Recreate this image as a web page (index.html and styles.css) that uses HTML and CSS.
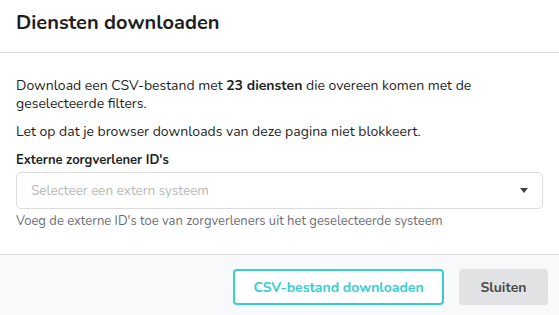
FILE: index.html
```html
<!DOCTYPE html>
<html lang="nl">
<head>
  <meta charset="UTF-8" />
  <title>Diensten downloaden</title>
  <link rel="stylesheet" href="styles.css">
</head>
<body>
  <div class="modal">
    <div class="modal-header">
      <h1>Diensten downloaden</h1>
    </div>

    <div class="modal-body">
      <p>Download een CSV-bestand met <strong>23 diensten</strong> die overeen komen met de geselecteerde filters.</p>
      <p>Let op dat je browser downloads van deze pagina niet blokkeert.</p>

      <div class="form-group">
        <label>Externe zorgverlener ID's</label>
        <div class="select">
          <span class="placeholder">Selecteer een extern systeem</span>
          <span class="caret"></span>
        </div>
        <div class="help">Voeg de externe ID's toe van zorgverleners uit het geselecteerde systeem</div>
      </div>
    </div>

    <div class="modal-footer">
      <button class="btn btn-outline">CSV-bestand downloaden</button>
      <button class="btn btn-grey">Sluiten</button>
    </div>
  </div>
</body>
</html>
```

FILE: styles.css
```css
body {
  margin: 0;
  font-family: "Nunito", Lato, "Noto Sans", sans-serif;
  color: #1f1f1f;
  background-color: white;
}

.modal {
  width: 559px;
  height: 315px;
  display: flex;
  flex-direction: column;
}

.modal-header {
  height: 53px;
  padding: 0 16px;
  border-bottom: 1px solid #dedede;
  box-sizing: border-box;
}

.modal-header h1 {
  margin: 0;
  padding-top: 11px;
  font-size: 20px;
  line-height: 24px;
  font-weight: bold;
  color: #1f1f1f;
}

.modal-body {
  padding: 24px 16px 0;
  flex: 1;
}

.modal-body p {
  margin: 0 0 10px;
  font-size: 14px;
  line-height: 18px;
}

.modal-body strong {
  font-weight: bold;
}

.form-group label {
  display: block;
  font-size: 13px;
  font-weight: bold;
  line-height: 18px;
  margin-bottom: 3px;
}

.select {
  height: 37px;
  border: 1px solid #dcdcdc;
  border-radius: 5px;
  display: flex;
  align-items: center;
  justify-content: space-between;
  padding: 0 14px;
  box-sizing: border-box;
}

.placeholder {
  font-size: 13.5px;
  color: #b8b8b8;
}

.caret {
  width: 0;
  height: 0;
  border-left: 4px solid transparent;
  border-right: 4px solid transparent;
  border-top: 5px solid #444;
}

.help {
  margin-top: 4px;
  font-size: 13px;
  line-height: 17px;
  color: #6f6f77;
}

.modal-footer {
  height: 61px;
  background-color: #f8f9fa;
  border-top: 1px solid #dedede;
  box-sizing: border-box;
  display: flex;
  justify-content: flex-end;
  align-items: flex-start;
  gap: 15px;
  padding: 14px 11px 0 0;
}

.btn {
  height: 36px;
  border-radius: 4px;
  font-family: inherit;
  font-size: 14px;
  font-weight: bold;
  cursor: pointer;
}

.btn-outline {
  width: 211px;
  background-color: white;
  border: 2px solid #36cfd1;
  color: #36cfd1;
}

.btn-grey {
  width: 89px;
  background-color: #e1e2e4;
  border: none;
  color: #4a4a4a;
}
```
